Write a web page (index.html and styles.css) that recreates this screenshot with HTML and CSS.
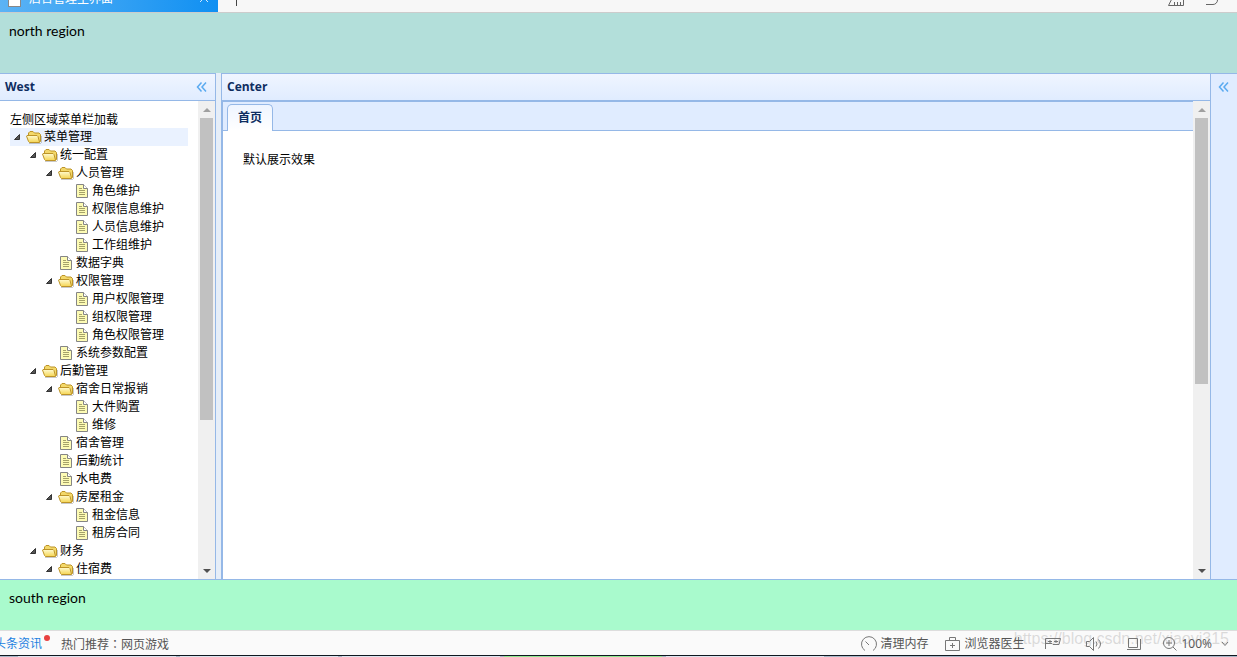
FILE: index.html
```html
<!DOCTYPE html>
<html lang="zh-CN">
<head>
    <meta charset="UTF-8">
    <title>后台管理主界面</title>
    <link rel="stylesheet" href="styles.css">
</head>
<body>
    <!-- 图标 -->
    <svg class="sprite" width="0" height="0">
        <defs>
            <linearGradient id="folderFill" x1="0" y1="0" x2="0" y2="1">
                <stop offset="0" stop-color="#fffbd0"/>
                <stop offset="1" stop-color="#f5d552"/>
            </linearGradient>
            <symbol id="folder" viewBox="0 0 16 16">
                <path d="M3 14.500h11.500l1-1V7" fill="none" stroke="#777" stroke-opacity=".4"/>
                <path d="M2.500 7.500V4l1.500-1.500h3L8.500 4h4.500l1.500 1.500V12.500l-1 1H4z" fill="#f3d869" stroke="#bd9428" stroke-linejoin="round"/>
                <path d="M1 6.500h10l1 1l1.500 5.500-.5.500H3.500l-1-1L.5 7z" fill="url(#folderFill)" stroke="#bd9428" stroke-linejoin="round"/>
            </symbol>
            <symbol id="file" viewBox="0 0 16 16">
                <path d="M2.500 1.500h7l4 4v9h-11z" fill="#fdfbb4" stroke="#858585"/>
                <path d="M9.500 1.500v4h4" fill="#fff" stroke="#858585"/>
                <path d="M5 5.500h3M5 7.500h6M5 9.500h6M5 11.500h6" stroke="#a5a26a"/>
            </symbol>
            <symbol id="arrow" viewBox="0 0 16 16">
                <path d="M9.500 5.500v5H4.500z" fill="#555" stroke="#333" stroke-linejoin="round"/>
            </symbol>
            <symbol id="collapse" viewBox="0 0 16 16">
                <path d="M7.500 3.500L3.500 8l4 4.500M12 3.500L8 8l4 4.500" fill="none" stroke="#5aaaf0" stroke-width="1.500"/>
            </symbol>
        </defs>
    </svg>

    <div class="browser-tabs">
        <div class="browser-tab">
            <span class="page-icon"></span>
            <span class="browser-title">后台管理主界面</span>
            <button class="browser-close" aria-label="关闭"><svg width="10" height="10" viewBox="0 0 10 10"><path d="M1 1l8 8M9 1l-8 8" stroke="#d5ecff"/></svg></button>
        </div>
        <button class="new-tab" aria-label="新标签"><svg width="13" height="13" viewBox="0 0 13 13"><path d="M6.500 0v13M0 6.500h13" stroke="#444"/></svg></button>
        <div class="browser-tools">
            <button aria-label="清理"><svg width="18" height="16" viewBox="0 0 18 16"><path d="M9 0v5M5 7.500h11.500v7h-15zM7.500 14v-3M10.500 14v-3M13.500 14v-3" fill="none" stroke="#666"/></svg></button>
            <button aria-label="撤销"><svg width="18" height="16" viewBox="0 0 18 16"><path d="M5 4.500h5a4.500 4.500 0 0 1 0 9H3" fill="none" stroke="#666"/></svg></button>
        </div>
    </div>

    <div class="north">north region</div>

    <div class="layout">
        <div class="west">
            <div class="panel-header">
                <span>West</span>
                <button class="panel-tool" aria-label="收起"><svg width="16" height="16"><use href="#collapse"/></svg></button>
            </div>
            <div class="panel-body">
                <div class="west-content">
                    <div class="line">左侧区域菜单栏加载</div>
                    <ul class="tree">
                        <li>
                            <div class="node selected"><svg><use href="#arrow"/></svg><svg><use href="#folder"/></svg><span>菜单管理</span></div>
                            <ul>
                                <li>
                                    <div class="node"><svg><use href="#arrow"/></svg><svg><use href="#folder"/></svg><span>统一配置</span></div>
                                    <ul>
                                        <li>
                                            <div class="node"><svg><use href="#arrow"/></svg><svg><use href="#folder"/></svg><span>人员管理</span></div>
                                            <ul>
                                                <li><div class="node leaf"><svg><use href="#file"/></svg><span>角色维护</span></div></li>
                                                <li><div class="node leaf"><svg><use href="#file"/></svg><span>权限信息维护</span></div></li>
                                                <li><div class="node leaf"><svg><use href="#file"/></svg><span>人员信息维护</span></div></li>
                                                <li><div class="node leaf"><svg><use href="#file"/></svg><span>工作组维护</span></div></li>
                                            </ul>
                                        </li>
                                        <li><div class="node leaf"><svg><use href="#file"/></svg><span>数据字典</span></div></li>
                                        <li>
                                            <div class="node"><svg><use href="#arrow"/></svg><svg><use href="#folder"/></svg><span>权限管理</span></div>
                                            <ul>
                                                <li><div class="node leaf"><svg><use href="#file"/></svg><span>用户权限管理</span></div></li>
                                                <li><div class="node leaf"><svg><use href="#file"/></svg><span>组权限管理</span></div></li>
                                                <li><div class="node leaf"><svg><use href="#file"/></svg><span>角色权限管理</span></div></li>
                                            </ul>
                                        </li>
                                        <li><div class="node leaf"><svg><use href="#file"/></svg><span>系统参数配置</span></div></li>
                                    </ul>
                                </li>
                                <li>
                                    <div class="node"><svg><use href="#arrow"/></svg><svg><use href="#folder"/></svg><span>后勤管理</span></div>
                                    <ul>
                                        <li>
                                            <div class="node"><svg><use href="#arrow"/></svg><svg><use href="#folder"/></svg><span>宿舍日常报销</span></div>
                                            <ul>
                                                <li><div class="node leaf"><svg><use href="#file"/></svg><span>大件购置</span></div></li>
                                                <li><div class="node leaf"><svg><use href="#file"/></svg><span>维修</span></div></li>
                                            </ul>
                                        </li>
                                        <li><div class="node leaf"><svg><use href="#file"/></svg><span>宿舍管理</span></div></li>
                                        <li><div class="node leaf"><svg><use href="#file"/></svg><span>后勤统计</span></div></li>
                                        <li><div class="node leaf"><svg><use href="#file"/></svg><span>水电费</span></div></li>
                                        <li>
                                            <div class="node"><svg><use href="#arrow"/></svg><svg><use href="#folder"/></svg><span>房屋租金</span></div>
                                            <ul>
                                                <li><div class="node leaf"><svg><use href="#file"/></svg><span>租金信息</span></div></li>
                                                <li><div class="node leaf"><svg><use href="#file"/></svg><span>租房合同</span></div></li>
                                            </ul>
                                        </li>
                                    </ul>
                                </li>
                                <li>
                                    <div class="node"><svg><use href="#arrow"/></svg><svg><use href="#folder"/></svg><span>财务</span></div>
                                    <ul>
                                        <li><div class="node"><svg><use href="#arrow"/></svg><svg><use href="#folder"/></svg><span>住宿费</span></div></li>
                                    </ul>
                                </li>
                            </ul>
                        </li>
                    </ul>
                </div>
                <div class="scrollbar">
                    <button class="scroll-up" aria-label="向上"></button>
                    <div class="scroll-track"><div class="thumb west-thumb"></div></div>
                    <button class="scroll-down" aria-label="向下"></button>
                </div>
            </div>
        </div>

        <div class="center">
            <div class="panel-header"><span>Center</span></div>
            <div class="panel-body">
                <div class="tabs">
                    <div class="tabs-header">
                        <button class="tab">首页</button>
                    </div>
                    <div class="tab-content">默认展示效果</div>
                </div>
                <div class="scrollbar">
                    <button class="scroll-up" aria-label="向上"></button>
                    <div class="scroll-track"><div class="thumb center-thumb"></div></div>
                    <button class="scroll-down" aria-label="向下"></button>
                </div>
            </div>
        </div>

        <div class="east">
            <button class="panel-tool" aria-label="展开"><svg width="16" height="16"><use href="#collapse"/></svg></button>
        </div>
    </div>

    <div class="south">south region</div>

    <div class="statusbar">
        <a href="#" class="news">头条资讯</a>
        <a href="#" class="hot">热门推荐：网页游戏</a>
        <div class="status-tools">
            <button><svg width="16" height="16" viewBox="0 0 16 16"><path d="M4 14.500A7.500 7.500 0 1 1 12 14.500M8 9L4.500 5.500" fill="none" stroke="#777"/></svg>清理内存</button>
            <button><svg width="16" height="16" viewBox="0 0 16 16"><path d="M.5 4.500h14v10H.5zM4.500 4V1.500h6V4M7.500 7v5M5 9.500h5" fill="none" stroke="#777"/></svg>浏览器医生</button>
            <button class="icon-only" aria-label="加速"><svg width="18" height="16" viewBox="0 0 18 16"><path d="M1.500 13V2.500h15l-1.500 6H9l-1-1H2M4 5.500h4M6 4v3M10 5.500h4M12 4v3" fill="none" stroke="#777"/></svg></button>
            <button class="icon-only" aria-label="声音"><svg width="18" height="16" viewBox="0 0 18 16"><path d="M1.500 5.500h3l4-4v13l-4-4h-3zM11 5.500q2 2.500 0 5M13.500 3.500q4 4.500 0 9" fill="none" stroke="#777"/></svg></button>
            <button class="icon-only" aria-label="窗口"><svg width="16" height="16" viewBox="0 0 16 16"><path d="M2.500 2.500h9v9h-9zM1 13.500h13.500V3" fill="none" stroke="#777"/></svg></button>
            <button class="zoom"><svg width="16" height="16" viewBox="0 0 16 16"><path d="M7 1.500a5.500 5.500 0 1 0 0 11a5.500 5.500 0 1 0 0-11M11 11l3.500 3.500M7 4v6M4 7h6" fill="none" stroke="#777"/></svg>100%<svg class="caret" width="8" height="6" viewBox="0 0 8 6"><path d="M1 1l3 3.500L7 1" fill="none" stroke="#777"/></svg></button>
        </div>
        <span class="watermark">https://blog.csdn.net/xiaoyi315</span>
    </div>
    <div class="taskbar"><span></span><span></span><span></span><span class="active"></span><span></span></div>
</body>
</html>
```
FILE: styles.css
```css
* {
    box-sizing: border-box;
}

body {
    margin: 0;
    height: 100vh;
    display: flex;
    flex-direction: column;
    overflow: hidden;
    font-family: "Open Sans", "Noto Sans CJK SC", sans-serif;
    font-size: 12px;
    line-height: 18px;
    color: #000;
}

button {
    padding: 0;
    border: none;
    background: none;
    font: inherit;
    color: inherit;
    cursor: pointer;
}

svg {
    display: block;
    flex: none;
}

.sprite {
    position: absolute;
}

/* 浏览器标签栏 */
.browser-tabs {
    display: flex;
    align-items: flex-end;
    flex: none;
    height: 13px;
    overflow: hidden;
    background: #f7f7f7;
    border-bottom: 1px solid #ccc;
}

.browser-tab {
    display: flex;
    align-items: flex-end;
    width: 218px;
    height: 32px;
    margin-bottom: -1px;
    padding: 0 9px 6px 8px;
    background: linear-gradient(to right, #5cb3f5, #1090f2);
    color: #fff;
}

.page-icon {
    width: 13px;
    height: 15px;
    margin-right: 8px;
    background: #fff;
    border: 1px solid #888;
}

.browser-title {
    flex: 1;
    line-height: 16px;
}

.browser-close {
    padding-bottom: 4px;
}

.new-tab {
    margin: 0 0 6px 12px;
}

.browser-tools {
    display: flex;
    gap: 18px;
    margin: 0 16px 5px auto;
}

.north,
.south {
    flex: none;
    padding: 9px;
    font-family: Lato, sans-serif;
    font-size: 14px;
}

.north {
    height: 60px;
    background: #b3dfda;
}

.south {
    height: 51px;
    border-top: 1px solid #95b8e7;
    background: #a9facd;
}

.layout {
    display: flex;
    flex: 1;
    min-height: 0;
    background: #e6eef8;
}

.west {
    display: flex;
    flex-direction: column;
    width: 216px;
    margin-right: 5px;
    border-right: 1px solid #95b8e7;
}

.center {
    display: flex;
    flex-direction: column;
    flex: 1;
    border-left: 1px solid #95b8e7;
}

.east {
    width: 27px;
    padding: 5px;
    border: 1px solid #95b8e7;
    border-width: 1px 0 0 1px;
    background: #e0ecff;
}

.panel-header {
    display: flex;
    align-items: center;
    justify-content: space-between;
    flex: none;
    height: 28px;
    padding: 0 5px;
    border: 1px solid #95b8e7;
    border-width: 1px 0;
    background: linear-gradient(to bottom, #eff5ff, #e0ecff);
    color: #0e2d5f;
    font-weight: bold;
}

.panel-body {
    display: flex;
    flex: 1;
    min-height: 0;
    background: #fff;
}

.west-content {
    flex: 1;
    padding: 10px 10px 0;
    overflow: hidden;
}

.line {
    height: 17px;
}

/* 菜单树 */
.tree,
.tree ul {
    margin: 0;
    padding: 0;
    list-style: none;
}

.tree ul {
    padding-left: 16px;
}

.node {
    display: flex;
    align-items: center;
    height: 18px;
    white-space: nowrap;
}

.node svg {
    width: 16px;
    height: 16px;
}

.node span {
    padding-left: 2px;
}

.leaf {
    padding-left: 16px;
}

.selected {
    background: #eaf2ff;
}

/* 滚动条 */
.scrollbar {
    display: flex;
    flex-direction: column;
    width: 17px;
    background: #f0f0f0;
}

.scroll-up,
.scroll-down {
    display: flex;
    align-items: center;
    justify-content: center;
    height: 17px;
}

.scroll-up::before,
.scroll-down::before {
    content: "";
    border: 4px solid transparent;
}

.scroll-up::before {
    border-top: none;
    border-bottom-color: #a0a0a0;
}

.scroll-down::before {
    border-bottom: none;
    border-top-color: #505050;
}

.scroll-track {
    flex: 1;
    padding: 0 2px;
}

.thumb {
    background: #c1c1c1;
}

.west-thumb {
    height: 68%;
}

.center-thumb {
    height: 60%;
}

/* 选项卡 */
.tabs {
    flex: 1;
    border-top: 1px solid #95b8e7;
    border-left: 1px solid #95b8e7;
}

.tabs-header {
    height: 29px;
    padding: 2px 4px 0;
    border-bottom: 1px solid #95b8e7;
    background: #e0ecff;
}

.tab {
    height: 27px;
    padding: 0 10px;
    border: 1px solid #95b8e7;
    border-bottom: none;
    border-radius: 5px 5px 0 0;
    background: linear-gradient(to bottom, #eff5ff, #fff);
    color: #0e2d5f;
    font-weight: bold;
}

.tab-content {
    padding: 20px;
}

/* 底部状态栏 */
.statusbar {
    position: relative;
    display: flex;
    align-items: center;
    flex: none;
    height: 25px;
    padding-top: 2px;
    border-top: 1px solid #ddd;
    background: #fafafa;
    color: #555;
}

.statusbar a {
    color: #555;
    text-decoration: none;
}

.statusbar .news {
    position: relative;
    margin-left: -6px;
    color: #1a80e0;
}

.news::after {
    content: "";
    position: absolute;
    top: 0;
    right: -8px;
    width: 6px;
    height: 6px;
    border-radius: 50%;
    background: #e84040;
}

.hot {
    margin-left: 19px;
    font-family: "Noto Sans CJK TC", sans-serif;
    font-feature-settings: "locl" 0;
}

.status-tools {
    display: flex;
    gap: 17px;
    margin-left: auto;
    padding-right: 8px;
}

.status-tools button {
    display: flex;
    align-items: center;
    gap: 3px;
}

.status-tools .icon-only {
    padding: 0 3px;
}

.status-tools .caret {
    margin-left: 6px;
}

.watermark {
    position: absolute;
    right: 8px;
    top: -1px;
    font: 16px/18px "Liberation Sans", sans-serif;
    color: rgba(120, 120, 120, 0.25);
    pointer-events: none;
}

.taskbar {
    display: flex;
    gap: 4px;
    flex: none;
    height: 2px;
    padding-left: 18px;
    border-top: 1px solid #101820;
    background: #a8b8c8;
}

.taskbar span {
    width: 158px;
    background: #dce4ee;
}

.taskbar .active {
    background: #90e890;
}
```
